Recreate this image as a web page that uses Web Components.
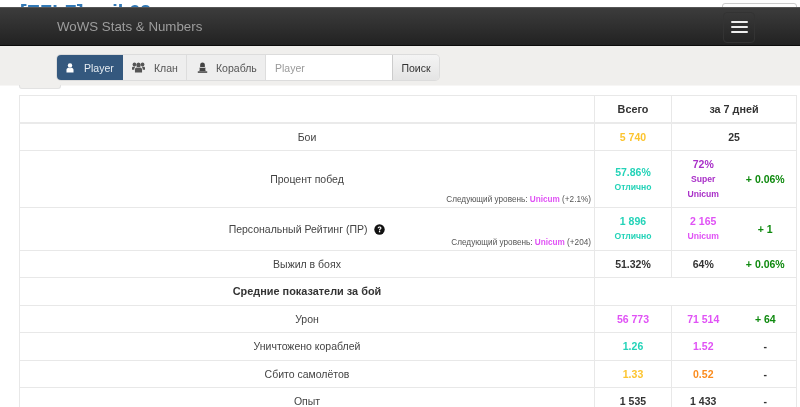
<!DOCTYPE html>
<html lang="ru">
<head>
<meta charset="utf-8">
<title>WoWS Stats & Numbers</title>
<style>
  html, body { margin: 0; padding: 0; background: #fff; height: 407px; overflow: hidden; }
  body { font-family: "Liberation Sans", Arial, sans-serif; font-size: 10.5px; color: #333; filter: blur(0.35px); }
</style>
</head>
<body>
<page-head></page-head>
<app-nav></app-nav>
<search-bar></search-bar>
<stats-table></stats-table>

<script>
class PageHead extends HTMLElement {
  constructor() {
    super();
    this.shadowDOM = this.attachShadow({ mode: "open" });
  }

  connectedCallback() {
    this.shadowDOM.innerHTML = `
      <style>
        :host {
          display: flex;
          justify-content: space-between;
          height: 7px;
          overflow: hidden;
          padding: 0 3px 0 20px;
        }
        h1 {
          margin: 0;
          padding-top: 1px;
          font-size: 20px;
          line-height: 22px;
          font-weight: bold;
          white-space: nowrap;
          color: #337ab7;
        }
        .lang {
          box-sizing: border-box;
          width: 75px;
          height: 20px;
          margin-top: 3px;
          padding-left: 5px;
          border: 1px solid #ccc;
          border-radius: 3px;
          font-size: 11px;
          line-height: 16px;
          color: #555;
        }
      </style>
      <h1>[EZLZ] snik62</h1>
      <div class="lang">Ник</div>
    `;
  }
}

class AppNav extends HTMLElement {
  constructor() {
    super();
    this.shadowDOM = this.attachShadow({ mode: "open" });
  }

  connectedCallback() {
    this.shadowDOM.innerHTML = `
      <style>
        :host {
          display: flex;
          align-items: center;
          justify-content: space-between;
          box-sizing: border-box;
          height: 39px;
          padding: 0 45px 0 57px;
          background: linear-gradient(to bottom, #3c3c3c 0%, #222 100%);
          border-top: 1px solid #555;
          border-bottom: 1px solid #0c0c0c;
        }
        .brand {
          font-size: 13.3px;
          color: #9d9d9d;
        }
        button {
          display: flex;
          flex-direction: column;
          gap: 3px;
          align-items: center;
          justify-content: center;
          box-sizing: border-box;
          width: 32px;
          height: 31px;
          padding: 0;
          margin-top: 1px;
          background: transparent;
          border: 1px solid #333;
          border-radius: 4px;
        }
        span {
          display: block;
          width: 17px;
          height: 2px;
          border-radius: 1px;
          background: #eee;
        }
      </style>
      <div class="brand">WoWS Stats &amp; Numbers</div>
      <button type="button" aria-label="menu"><span></span><span></span><span></span></button>
    `;
  }
}

class SearchBar extends HTMLElement {
  constructor() {
    super();
    this.shadowDOM = this.attachShadow({ mode: "open" });
  }

  connectedCallback() {
    this.shadowDOM.innerHTML = `
      <style>
        :host {
          display: block;
          position: relative;
          box-sizing: border-box;
          height: 39px;
          padding: 9px 0 0 57px;
          background: #f0efed;
          box-shadow: 0 1px 0 #f7f6f5;
        }
        .group {
          display: flex;
          width: 382px;
          height: 25px;
          box-sizing: border-box;
          border-radius: 4px;
          box-shadow: 0 0 0 1px #dcdcdc;
          font-size: 10.5px;
        }
        .item {
          display: flex;
          align-items: center;
          box-sizing: border-box;
          height: 25px;
          background: #eee;
          border-right: 1px solid #ddd;
          color: #555;
          white-space: nowrap;
        }
        .active {
          width: 66px;
          padding-left: 9px;
          background: #34587e;
          color: #e6ecf2;
          border: 0;
          border-radius: 4px 0 0 4px;
          gap: 10px;
        }
        .clan { width: 64px; padding-left: 9px; gap: 9px; }
        .ship { width: 79px; padding-left: 10px; gap: 8px; }
        .field {
          width: 126px;
          padding-left: 9px;
          background: #fff;
          color: #999;
          border: 0;
        }
        .go {
          width: 47px;
          justify-content: center;
          background: linear-gradient(to bottom, #f4f4f4, #e4e4e4);
          border: 0;
          border-left: 1px solid #ccc;
          border-radius: 0 4px 4px 0;
          color: #333;
        }
        svg { display: block; flex: none; }
        .tab {
          position: absolute;
          left: 19px;
          top: 39px;
          width: 42px;
          height: 4px;
          background: #f0efed;
          border: 1px solid #e2e2e2;
          border-top: 0;
          box-sizing: border-box;
          border-radius: 0 0 3px 3px;
        }
      </style>
      <div class="group">
        <div class="item active">
          <svg width="8" height="10" viewBox="0 0 10 12" fill="#fff"><circle cx="5" cy="3" r="2.8"/><path d="M.6 11.5V8.4C.6 6.8 1.8 5.8 3 5.6c1.2.8 2.8.8 4 0 1.2.2 2.4 1.2 2.4 2.8v3.1z"/></svg>
          <span>Player</span>
        </div>
        <div class="item clan">
          <svg width="13" height="11" viewBox="0 0 15 11" preserveAspectRatio="none" fill="#555"><circle cx="7.5" cy="3" r="2.6"/><circle cx="2.8" cy="2.6" r="2.1"/><circle cx="12.2" cy="2.6" r="2.1"/><path d="M3.4 10.5V7.6c0-1.3 1-2 2-2.1.9.5 3.1.5 4 0 1 .1 2.2.8 2.2 2.1v2.9z"/><path d="M0 7.8V5.9c0-.7.6-1.2 1.3-1.2.7.4 1.6.5 2.3.3-.6.6-1 1.4-1 2.4v.4zM15 7.8V5.9c0-.7-.6-1.2-1.3-1.2-.7.4-1.6.5-2.3.3.6.6 1 1.4 1 2.4v.4z"/></svg>
          <span>Клан</span>
        </div>
        <div class="item ship">
          <svg width="11" height="11" viewBox="0 0 14 12" preserveAspectRatio="none" fill="#444"><path d="M4 5.4V3.2C4 1.4 5.4.5 7 .5s3 .9 3 2.7v2.2z"/><path d="M3 6.2h8V7h-.6l.6 3H3l.6-3H3z"/><rect x="1" y="10.2" width="12" height="1.6"/></svg>
          <span>Корабль</span>
        </div>
        <div class="item field">Player</div>
        <div class="item go">Поиск</div>
      </div>
      <div class="tab"></div>
    `;
  }
}

// colours of the rating levels
const PURPLE = "#e052f5";
const TEAL = "#24d3b8";
const YELLOW = "#fcc42f";
const ORANGE = "#fb8c1e";
const GREEN = "#0f8a0f";

class StatsTable extends HTMLElement {
  constructor() {
    super();
    this.shadowDOM = this.attachShadow({ mode: "open" });
  }

  cell(value, color, note) {
    const style = color ? ` style="color:${color}"` : "";
    const extra = note ? `<div class="note">${note}</div>` : "";
    return `<td class="num"${style}>${value}${extra}</td>`;
  }

  hint(text, color, rest) {
    return `<div class="hint">Следующий уровень: <b style="color:${color}">${text}</b> ${rest}</div>`;
  }

  connectedCallback() {
    this.shadowDOM.innerHTML = `
      <style>
        :host {
          display: block;
          margin: 10px 4px 0 19px;
        }
        table {
          width: 777px;
          table-layout: fixed;
          border-collapse: collapse;
          font-size: 10.5px;
          color: #333;
          background: #fff;
        }
        td, th {
          border: 1px solid #e8e8e8;
          padding: 0;
          text-align: center;
          vertical-align: middle;
        }
        tr { height: 27.5px; }
        .tall-a { height: 57px; }
        .tall-b { height: 42.5px; }
        thead tr { border-bottom: 2px solid #eaeaea; }
        th { font-weight: bold; font-size: 10.8px; }
        .label { position: relative; color: #444; }
        .label > b { font-size: 10.9px; color: #333; }
        .num { font-weight: bold; line-height: 16px; }
        .delta { border-left: 0; }
        .week { border-right: 0; }
        .note { font-size: 8.6px; line-height: 15px; }
        .hint {
          position: absolute;
          right: 3px;
          bottom: 2px;
          font-size: 8.2px;
          line-height: 11px;
          color: #555;
          white-space: nowrap;
        }
        .q { display: inline-block; vertical-align: -2px; margin-left: 4px; }
      </style>
      <table>
        <colgroup>
          <col style="width:575px"><col style="width:77px"><col style="width:63px"><col style="width:62px">
        </colgroup>
        <thead>
          <tr><th></th><th>Всего</th><th colspan="2">за 7 дней</th></tr>
        </thead>
        <tbody>
          <tr><td class="label">Бои</td>${this.cell("5 740", YELLOW)}<td class="num" colspan="2">25</td></tr>
          <tr class="tall-a">
            <td class="label">Процент побед${this.hint("Unicum", PURPLE, "(+2.1%)")}</td>
            ${this.cell("57.86%", TEAL, "Отлично")}
            <td class="num week" style="color:#a92fc8">72%<div class="note">Super<br>Unicum</div></td>
            <td class="num delta" style="color:${GREEN}">+ 0.06%</td>
          </tr>
          <tr class="tall-b">
            <td class="label">Персональный Рейтинг (ПР)
              <svg class="q" width="11" height="11" viewBox="0 0 11 11"><circle cx="5.5" cy="5.5" r="5.2" fill="#111"/><path d="M3.6 4.3c.1-1.2 1-1.8 2-1.8s1.9.6 1.9 1.6c0 1.3-1.4 1.2-1.4 2.3H5c0-1.7 1.3-1.5 1.3-2.3 0-.4-.3-.6-.7-.6-.5 0-.8.3-.9.8z" fill="#fff"/><rect x="4.9" y="7" width="1.3" height="1.3" fill="#fff"/></svg>
              ${this.hint("Unicum", PURPLE, "(+204)")}
            </td>
            ${this.cell("1 896", TEAL, "Отлично")}
            <td class="num week" style="color:${PURPLE}">2 165<div class="note">Unicum</div></td>
            <td class="num delta" style="color:${GREEN}">+ 1</td>
          </tr>
          <tr><td class="label">Выжил в боях</td>${this.cell("51.32%")}<td class="num week">64%</td><td class="num delta" style="color:${GREEN}">+ 0.06%</td></tr>
          <tr><td class="label"><b>Средние показатели за бой</b></td><td colspan="3"></td></tr>
          <tr><td class="label">Урон</td>${this.cell("56 773", PURPLE)}<td class="num week" style="color:${PURPLE}">71 514</td><td class="num delta" style="color:${GREEN}">+ 64</td></tr>
          <tr><td class="label">Уничтожено кораблей</td>${this.cell("1.26", TEAL)}<td class="num week" style="color:${PURPLE}">1.52</td><td class="num delta">-</td></tr>
          <tr><td class="label">Сбито самолётов</td>${this.cell("1.33", YELLOW)}<td class="num week" style="color:${ORANGE}">0.52</td><td class="num delta">-</td></tr>
          <tr><td class="label">Опыт</td>${this.cell("1 535")}<td class="num week">1 433</td><td class="num delta">-</td></tr>
        </tbody>
      </table>
    `;
  }
}

customElements.define("page-head", PageHead);
customElements.define("app-nav", AppNav);
customElements.define("search-bar", SearchBar);
customElements.define("stats-table", StatsTable);
</script>
</body>
</html>
